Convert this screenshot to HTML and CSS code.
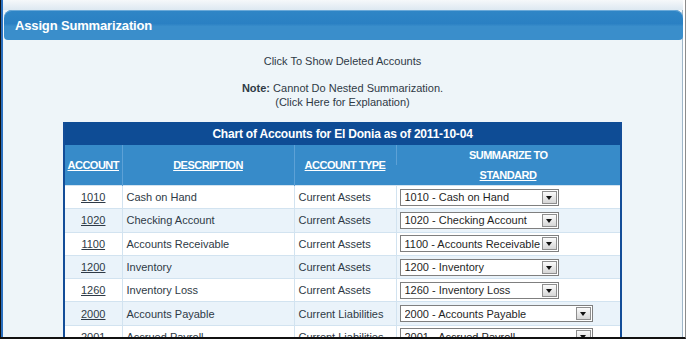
FILE: index.html
```html
<!DOCTYPE html>
<html lang="en">
<head>
    <meta charset="UTF-8">
    <title>Assign Summarization</title>
    <link rel="stylesheet" href="styles.css">
</head>
<body>
    <div class="window">
        <div class="topband"></div>
        <div class="panel">
            <div class="panel-head">Assign Summarization</div>
            <div class="panel-body">
                <p class="show-deleted"><a href="#">Click To Show Deleted Accounts</a></p>
                <p class="note"><strong>Note:</strong> Cannot Do Nested Summarization.<br><a href="#">(Click Here for Explanation)</a></p>

                <table class="coa">
                    <colgroup>
                        <col class="c-acct">
                        <col class="c-desc">
                        <col class="c-type">
                        <col class="c-sum">
                    </colgroup>
                    <thead>
                        <tr>
                            <th class="title" colspan="4">Chart of Accounts for El Donia as of 2011-10-04</th>
                        </tr>
                        <tr class="head">
                            <th rowspan="2"><a href="#">ACCOUNT</a></th>
                            <th rowspan="2"><a href="#">DESCRIPTION</a></th>
                            <th rowspan="2"><a href="#">ACCOUNT TYPE</a></th>
                            <th class="sub">SUMMARIZE TO</th>
                        </tr>
                        <tr class="head">
                            <th class="sub"><a href="#">STANDARD</a></th>
                        </tr>
                    </thead>
                    <tbody>
                        <tr>
                            <td class="num"><a href="#">1010</a></td>
                            <td>Cash on Hand</td>
                            <td>Current Assets</td>
                            <td><div class="pick"><span>1010 - Cash on Hand</span><i class="arrow"></i></div></td>
                        </tr>
                        <tr class="alt">
                            <td class="num"><a href="#">1020</a></td>
                            <td>Checking Account</td>
                            <td>Current Assets</td>
                            <td><div class="pick"><span>1020 - Checking Account</span><i class="arrow"></i></div></td>
                        </tr>
                        <tr>
                            <td class="num"><a href="#">1100</a></td>
                            <td>Accounts Receivable</td>
                            <td>Current Assets</td>
                            <td><div class="pick"><span>1100 - Accounts Receivable</span><i class="arrow"></i></div></td>
                        </tr>
                        <tr class="alt">
                            <td class="num"><a href="#">1200</a></td>
                            <td>Inventory</td>
                            <td>Current Assets</td>
                            <td><div class="pick"><span>1200 - Inventory</span><i class="arrow"></i></div></td>
                        </tr>
                        <tr>
                            <td class="num"><a href="#">1260</a></td>
                            <td>Inventory Loss</td>
                            <td>Current Assets</td>
                            <td><div class="pick"><span>1260 - Inventory Loss</span><i class="arrow"></i></div></td>
                        </tr>
                        <tr class="alt">
                            <td class="num"><a href="#">2000</a></td>
                            <td>Accounts Payable</td>
                            <td>Current Liabilities</td>
                            <td><div class="pick wide"><span>2000 - Accounts Payable</span><i class="arrow"></i></div></td>
                        </tr>
                        <tr>
                            <td class="num"><a href="#">2001</a></td>
                            <td>Accrued Payroll</td>
                            <td>Current Liabilities</td>
                            <td><div class="pick wide"><span>2001 - Accrued Payroll</span><i class="arrow"></i></div></td>
                        </tr>
                    </tbody>
                </table>
            </div>
        </div>
    </div>
</body>
</html>
```

FILE: styles.css
```css
html, body {
    margin: 0;
    padding: 0;
    background: #ffffff;
}
body {
    font-family: "Liberation Sans", Arial, sans-serif;
    font-size: 11px;
    color: #2e3a46;
}
.window {
    box-sizing: border-box;
    width: 686px;
    height: 339px;
    overflow: hidden;
    border-left: 1px solid #111111;
    border-bottom: 2px solid #111111;
    border-right: 1px solid #8c8c8c;
    background: #ffffff;
    display: flex;
    flex-direction: column;
}
.topband {
    flex-shrink: 0;
    height: 10px;
    margin-right: 2px;
    border-left: 2px solid #2a6fbe;
    background: linear-gradient(#f6f8fa, #dde8f1);
}
.panel {
    flex: 1 0 auto;
    display: flex;
    flex-direction: column;
    margin-right: 2px;
    border-left: 2px solid #2a6fbe;
    border-right: 1px solid #9fb6c8;
    background: #eef5f9;
}
.panel-head {
    flex-shrink: 0;
    height: 30px;
    margin-left: 1px;
    margin-right: -1px;
    padding-left: 11px;
    border-radius: 8px 8px 4px 4px;
    background: linear-gradient(#2f86c6 0%, #2a80c3 45%, #3a8ecb 55%, #3a8ecb 100%);
    box-shadow: inset 0 1px 0 #6aa9d8;
    color: #ffffff;
    font-size: 13px;
    font-weight: bold;
    line-height: 31px;
    letter-spacing: -0.15px;
}
.panel-body {
    padding-top: 14px;
    text-align: center;
}
.panel-body a {
    color: #2e3a46;
    text-decoration: none;
}
.show-deleted {
    margin: 0;
    line-height: 14px;
}
.note {
    margin: 13px 0 0;
    line-height: 14px;
}
.note strong {
    font-weight: bold;
}

.coa {
    width: 559px;
    margin: 13px auto 0;
    border-collapse: collapse;
    border-left: 2px solid #134d98;
    border-right: 2px solid #134d98;
    text-align: left;
}
.c-acct { width: 58px; }
.c-desc { width: 172px; }
.c-type { width: 102px; }
.c-sum { width: 225px; }

.coa th.title {
    height: 23px;
    padding: 0;
    background: #0e4c95;
    color: #ffffff;
    font-size: 12px;
    font-weight: bold;
    letter-spacing: -0.2px;
    text-align: center;
}
.coa tr.head th {
    padding: 0;
    background: #378bc9;
    border-left: 1px solid #5da1d6;
    color: #ffffff;
    font-size: 11px;
    font-weight: bold;
    letter-spacing: -0.5px;
    text-align: center;
}
.coa tr.head th:first-child {
    border-left: none;
}
.coa tr.head th a {
    color: #ffffff;
    text-decoration: underline;
}
.coa th.sub {
    height: 20px;
}

.coa td {
    height: 22.3px;
    padding: 0 4px;
    border-top: 1px solid #d2e3f0;
    border-left: 1px solid #d2e3f0;
    background: #ffffff;
    white-space: nowrap;
}
.coa td:first-child {
    border-left: none;
}
.coa tr.alt td {
    background: #eaf3fa;
}
.coa td.num {
    text-align: center;
}
.coa td.num a {
    text-decoration: underline;
}

.pick {
    box-sizing: border-box;
    display: flex;
    align-items: center;
    width: 159px;
    height: 17px;
    margin-left: -1px;
    padding-left: 4px;
    padding-right: 1px;
    border: 1px solid #7f7f7f;
    background: #ffffff;
    color: #1f1f1f;
    font-size: 11px;
}
.pick.wide {
    width: 193px;
}
.pick span {
    flex: 1;
    overflow: hidden;
    white-space: nowrap;
}
.pick .arrow {
    box-sizing: border-box;
    flex-shrink: 0;
    width: 15px;
    height: 13px;
    display: flex;
    align-items: center;
    justify-content: center;
    border: 1px solid #8e8e8e;
    background: linear-gradient(#fbfbfb, #d6d6d6);
}
.pick .arrow::after {
    content: "";
    border-top: 4px solid #111111;
    border-left: 3px solid transparent;
    border-right: 3px solid transparent;
    margin-top: 1px;
}
```
